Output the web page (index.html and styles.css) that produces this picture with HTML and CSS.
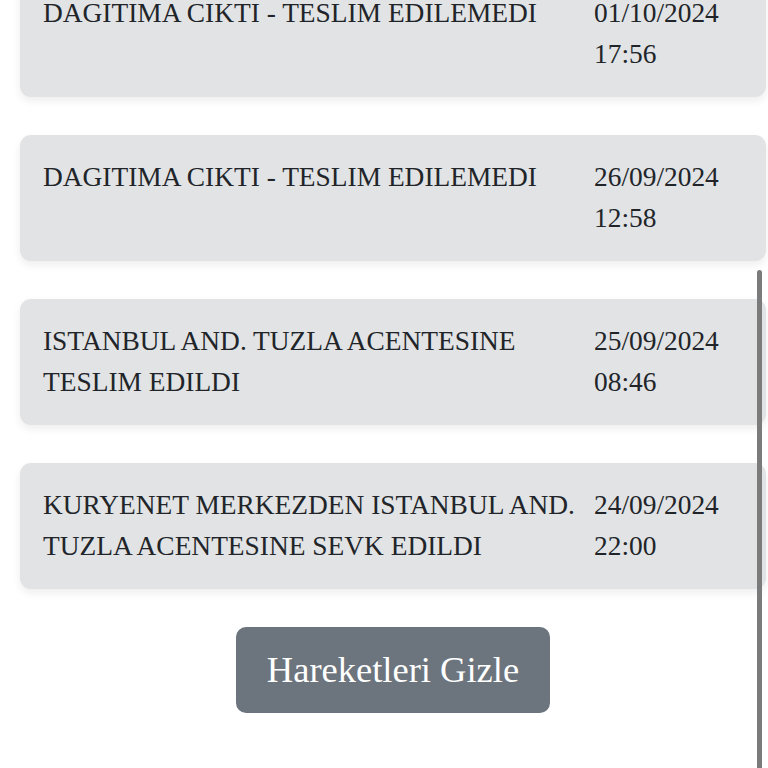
FILE: index.html
```html
<!DOCTYPE html>
<html lang="tr">
<head>
<meta charset="utf-8">
<link rel="stylesheet" href="styles.css">
</head>
<body>
<div class="page">
  <div class="list">
    <div class="card">
      <div class="desc">DAGITIMA CIKTI - TESLIM EDILEMEDI</div>
      <div class="date">01/10/2024<br>17:56</div>
    </div>
    <div class="card">
      <div class="desc">DAGITIMA CIKTI - TESLIM EDILEMEDI</div>
      <div class="date">26/09/2024<br>12:58</div>
    </div>
    <div class="card">
      <div class="desc">ISTANBUL AND. TUZLA ACENTESINE TESLIM EDILDI</div>
      <div class="date">25/09/2024<br>08:46</div>
    </div>
    <div class="card">
      <div class="desc">KURYENET MERKEZDEN ISTANBUL AND. TUZLA ACENTESINE SEVK EDILDI</div>
      <div class="date">24/09/2024<br>22:00</div>
    </div>
  </div>
  <div class="actions">
    <button class="btn">Hareketleri Gizle</button>
  </div>
</div>
<div class="scrollbar"></div>
</body>
</html>
```
FILE: styles.css
```css
html, body {
  margin: 0;
  padding: 0;
  background: #ffffff;
  height: 768px;
  overflow: hidden;
}
.page {
  width: 746px;
  margin-left: 20px;
  font-family: "Liberation Serif", "Times New Roman", serif;
  color: #212529;
}
.list {
  display: flex;
  flex-direction: column;
  gap: 38px;
  margin-top: -29px;
}
.card {
  background: #e2e3e5;
  border-radius: 11px;
  box-shadow: 0 4px 9px rgba(0, 0, 0, 0.07);
  padding: 22px 23px;
  display: grid;
  grid-template-columns: 1fr 149px;
  font-size: 27.4px;
  line-height: 41px;
  min-height: 82px;
}
.desc {
  padding-right: 10px;
}
.actions {
  display: flex;
  justify-content: center;
  margin-top: 38px;
}
.btn {
  font-family: "Liberation Serif", "Times New Roman", serif;
  font-size: 36.5px;
  line-height: 54px;
  color: #ffffff;
  background: #6c757d;
  border: 2px solid #6c757d;
  border-radius: 10px;
  padding: 14px 29px;
  cursor: pointer;
}
.scrollbar {
  position: absolute;
  left: 757px;
  top: 270px;
  width: 5px;
  height: 520px;
  background: #7b7b7b;
  border-radius: 3px;
}
```
